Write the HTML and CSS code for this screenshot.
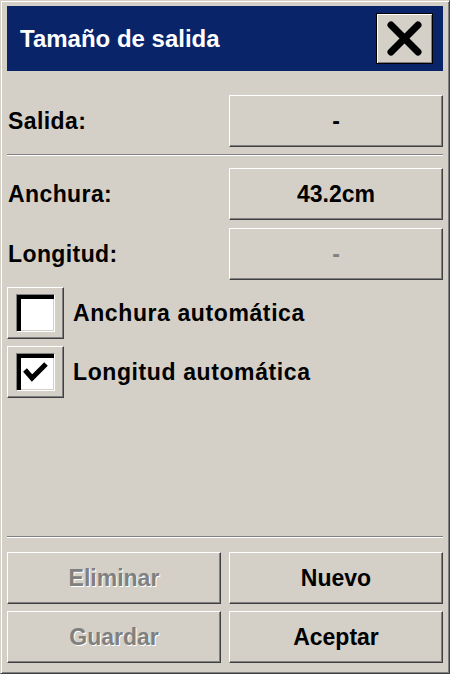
FILE: index.html
```html
<!DOCTYPE html>
<html lang="es">
<head>
<meta charset="utf-8">
<title>Tamaño de salida</title>
<link rel="stylesheet" href="styles.css">
</head>
<body>
<div class="window">
  <div class="titlebar">
    <span class="title">Tamaño de salida</span>
    <div class="close">
      <svg width="55" height="49" viewBox="0 0 55 49">
        <line x1="14" y1="11" x2="41" y2="38" stroke="#000" stroke-width="7" stroke-linecap="round"/>
        <line x1="41" y1="11" x2="14" y2="38" stroke="#000" stroke-width="7" stroke-linecap="round"/>
      </svg>
    </div>
  </div>

  <div class="row row-first">
    <span class="label">Salida:</span>
    <div class="btn">-</div>
  </div>

  <div class="sep sep-top"></div>

  <div class="row">
    <span class="label">Anchura:</span>
    <div class="btn">43.2cm</div>
  </div>

  <div class="row row-gap">
    <span class="label">Longitud:</span>
    <div class="btn btn-dim">-</div>
  </div>

  <div class="check-row">
    <div class="check"><div class="box"></div></div>
    <span class="check-label">Anchura automática</span>
  </div>

  <div class="check-row">
    <div class="check">
      <div class="box">
        <svg width="37" height="36" viewBox="0 0 37 36">
          <polyline points="8,16 15,24 29,10" fill="none" stroke="#000" stroke-width="5"/>
        </svg>
      </div>
    </div>
    <span class="check-label">Longitud automática</span>
  </div>

  <div class="spacer"></div>

  <div class="sep sep-bottom"></div>

  <div class="actions">
    <div class="btn btn-disabled">Eliminar</div>
    <div class="btn">Nuevo</div>
    <div class="btn btn-disabled">Guardar</div>
    <div class="btn">Aceptar</div>
  </div>
</div>
</body>
</html>
```

FILE: styles.css
```css
html, body {
  margin: 0;
  padding: 0;
  background: #d4d0c8;
}

.window {
  box-sizing: border-box;
  width: 450px;
  height: 674px;
  display: flex;
  flex-direction: column;
  padding: 5px 6px 10px 6px;
  background: #d4d0c8;
  border-top: 1px solid #d4d0c8;
  border-left: 1px solid #d4d0c8;
  border-right: 1px solid #404040;
  border-bottom: 1px solid #404040;
  box-shadow: inset 1px 1px #ffffff, inset -1px -1px #808080;
  font-family: "Liberation Sans", Arial, sans-serif;
  font-weight: bold;
  font-size: 23px;
  color: #000;
}

.titlebar {
  height: 65px;
  flex: none;
  background: #0a246a;
  display: flex;
  align-items: center;
  justify-content: space-between;
  padding: 0 10px 0 13px;
}

.title {
  color: #ffffff;
  font-size: 24px;
}

.close {
  box-sizing: border-box;
  width: 57px;
  height: 51px;
  background: #d4d0c8;
  border: 1px solid #000;
  box-shadow: inset 1px 1px #ffffff, inset -1px -1px #808080;
}

.close svg {
  display: block;
}

.row {
  display: grid;
  grid-template-columns: 214px 214px;
  column-gap: 8px;
  align-items: center;
  height: 52px;
  flex: none;
}

.row-first {
  margin-top: 24px;
}

.row-gap {
  margin-top: 8px;
}

.label {
  padding-left: 1px;
  letter-spacing: 0.4px;
}

.btn {
  box-sizing: border-box;
  height: 52px;
  display: flex;
  align-items: center;
  justify-content: center;
  background: #d4d0c8;
  border-top: 1px solid #ffffff;
  border-left: 1px solid #ffffff;
  border-right: 1px solid #404040;
  border-bottom: 1px solid #404040;
  box-shadow: inset -1px -1px #808080;
}

.btn-dim {
  color: #808080;
}

.btn-disabled {
  color: #808080;
  text-shadow: 1px 1px 0 #ffffff;
}

.sep {
  flex: none;
  height: 0;
  border-top: 1px solid #808080;
  border-bottom: 1px solid #ffffff;
}

.sep-top {
  margin-top: 7px;
  margin-bottom: 12px;
}

.sep-bottom {
  margin-bottom: 14px;
}

.check-row {
  display: flex;
  align-items: center;
  margin-top: 7px;
  height: 52px;
  flex: none;
}

.check {
  box-sizing: border-box;
  width: 57px;
  height: 52px;
  display: flex;
  align-items: center;
  justify-content: center;
  background: #d4d0c8;
  border-top: 1px solid #ffffff;
  border-left: 1px solid #ffffff;
  border-right: 1px solid #404040;
  border-bottom: 1px solid #404040;
  box-shadow: inset -1px -1px #808080;
}

.box {
  box-sizing: border-box;
  width: 39px;
  height: 38px;
  background: #ffffff;
  border-top: 1px solid #808080;
  border-left: 1px solid #808080;
  border-right: 1px solid #ffffff;
  border-bottom: 1px solid #ffffff;
  box-shadow: inset 4px 4px #000000, inset -1px -1px #d4d0c8;
}

.box svg {
  display: block;
}

.check-label {
  margin-left: 9px;
  letter-spacing: 0.6px;
}

.spacer {
  flex: 1;
}

.actions {
  display: grid;
  grid-template-columns: 214px 214px;
  grid-auto-rows: 52px;
  column-gap: 8px;
  row-gap: 7px;
  flex: none;
}
```
